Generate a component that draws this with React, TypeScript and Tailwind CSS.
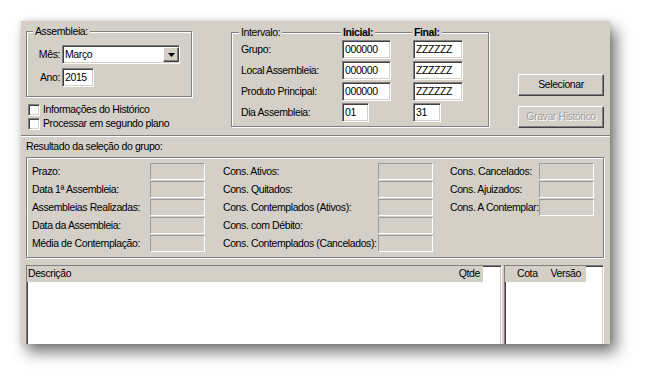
import React from "react";

const sunken =
  "border border-t-[#808080] border-l-[#808080] border-b-white border-r-white shadow-[inset_1px_1px_0_#404040,inset_-1px_-1px_0_#d4d0c8]";
const raised =
  "border border-t-white border-l-white border-b-[#404040] border-r-[#404040] shadow-[inset_-1px_-1px_0_#808080]";
const etched = "border border-[#808080] shadow-[inset_1px_1px_0_white,1px_1px_0_white]";

function Field({ value, w }: { value: string; w: string }) {
  return (
    <div className={`${sunken} ${w} h-[19px] bg-white flex items-center pl-[2px] leading-none`}>
      {value}
    </div>
  );
}

function ReadOnly() {
  return (
    <div className="w-[55px] h-[17px] shrink-0 border border-t-[#9a9a9a] border-l-[#9a9a9a] border-b-white border-r-white bg-[#d4d0c8]" />
  );
}

function Check({ label }: { label: string }) {
  return (
    <div className="flex items-center h-[14px]">
      <div className={`${sunken} w-[12px] h-[12px] bg-white`} />
      <span className="ml-[3px]">{label}</span>
    </div>
  );
}

function Button({ label, disabled }: { label: string; disabled?: boolean }) {
  return (
    <div
      className={`${raised} w-[86px] h-[22px] flex items-center justify-center ${
        disabled ? "text-[#a0a0a0] [text-shadow:1px_1px_0_white]" : "text-black"
      }`}
    >
      {label}
    </div>
  );
}

function ResultCol({ labels, labelW }: { labels: string[]; labelW: string }) {
  return (
    <div className="flex flex-col gap-[1px]">
      {labels.map((l) => (
        <div key={l} className="flex items-center h-[17px]">
          <span className={`${labelW} shrink-0 whitespace-nowrap`}>{l}</span>
          <ReadOnly />
        </div>
      ))}
    </div>
  );
}

export default function App() {
  return (
    <div className="w-[652px] h-[386px] bg-white pt-[21px] pl-[21px] font-['Liberation_Sans',Arial,sans-serif] text-[10.5px] tracking-[-0.4px] text-black">
      <div className="w-[589px] h-[323px] bg-[#d4d0c8] overflow-hidden flex flex-col shadow-[6px_8px_14px_rgba(0,0,0,0.55),0_0_5px_rgba(0,0,0,0.12)]">
        {/* top: filtros */}
        <div className="flex h-[114px] shrink-0">
          <div className="w-[171px] pl-[5px] pt-[10px]">
            <div className={`${etched} relative w-[166px] h-[66px]`}>
              <span className="absolute -top-[7px] left-[6px] px-[2px] bg-[#d4d0c8] leading-[13px]">Assembleia:</span>
              <div className="flex items-center mt-[13px]">
                <span className="w-[35px] text-right pr-[2px]">Mês:</span>
                <div className={`${sunken} w-[118px] h-[19px] bg-white flex items-center justify-between`}>
                  <span className="pl-[2px]">Março</span>
                  <div className={`${raised} w-[16px] h-[15px] bg-[#d4d0c8] flex items-center justify-center`}>
                    <svg width="7" height="4" viewBox="0 0 7 4">
                      <path d="M0 0h7L3.5 4z" fill="#000" />
                    </svg>
                  </div>
                </div>
              </div>
              <div className="flex items-center mt-[4px]">
                <span className="w-[35px] text-right pr-[2px]">Ano:</span>
                <Field value="2015" w="w-[32px]" />
              </div>
            </div>
            <div className="mt-[6px] pl-[2px]">
              <Check label="Informações do Histórico" />
              <Check label="Processar em segundo plano" />
            </div>
          </div>

          <div className={`${etched} relative ml-[39px] mt-[11px] w-[258px] h-[95px]`}>
            <span className="absolute -top-[7px] left-[7px] px-[2px] bg-[#d4d0c8] leading-[13px]">Intervalo:</span>
            <span className="absolute -top-[7px] left-[109px] px-[2px] bg-[#d4d0c8] leading-[13px] font-bold">Inicial:</span>
            <span className="absolute -top-[7px] left-[180px] px-[2px] bg-[#d4d0c8] leading-[13px] font-bold">Final:</span>
            <div className="flex flex-col gap-[2px] pt-[7px] pl-[9px]">
              {[
                ["Grupo:", "000000", "ZZZZZZ", "w-[49px]", "w-[50px]"],
                ["Local Assembleia:", "000000", "ZZZZZZ", "w-[49px]", "w-[50px]"],
                ["Produto Principal:", "000000", "ZZZZZZ", "w-[49px]", "w-[50px]"],
                ["Dia Assembleia:", "01", "31", "w-[27px]", "w-[28px]"],
              ].map(([l, a, b, wa, wb]) => (
                <div key={l} className="flex items-center h-[19px]">
                  <span className="w-[101px]">{l}</span>
                  <Field value={a} w={wa} />
                  <div className={wa === "w-[27px]" ? "w-[44px]" : "w-[22px]"} />
                  <Field value={b} w={wb} />
                </div>
              ))}
            </div>
          </div>

          <div className="ml-[29px] mt-[53px] flex flex-col gap-[10px]">
            <Button label="Selecionar" />
            <Button label="Gravar Histórico" disabled />
          </div>
        </div>

        <div className="h-[2px] shrink-0 border-t border-t-[#808080] border-b border-b-white" />

        <div className="h-[20px] shrink-0 flex items-center pl-[5px]">Resultado da seleção do grupo:</div>

        {/* resultado */}
        <div className={`${etched} shrink-0 mx-[5px] w-[578px] h-[101px] flex pt-[5px] pl-[5px]`}>
          <ResultCol
            labels={["Prazo:", "Data 1ª Assembleia:", "Assembleias Realizadas:", "Data da Assembleia:", "Média de Contemplação:"]}
            labelW="w-[118px]"
          />
          <div className="w-[18px]" />
          <ResultCol
            labels={[
              "Cons. Ativos:",
              "Cons. Quitados:",
              "Cons. Contemplados (Ativos):",
              "Cons. com Débito:",
              "Cons. Contemplados (Cancelados):",
            ]}
            labelW="w-[155px]"
          />
          <div className="w-[17px]" />
          <ResultCol labels={["Cons. Cancelados:", "Cons. Ajuizados:", "Cons. A Contemplar:"]} labelW="w-[89px]" />
        </div>

        {/* listas */}
        <div className="flex gap-[2px] mt-[7px] ml-[5px] flex-1">
          <div className={`${sunken} w-[476px] h-[90px] bg-white`}>
            <div className="w-[456px] h-[16px] bg-[#d4d0c8] flex items-center justify-between pl-[1px] pr-[3px]">
              <span>Descrição</span>
              <span>Qtde</span>
            </div>
          </div>
          <div className={`${sunken} w-[100px] h-[90px] bg-white`}>
            <div className="w-[81px] h-[16px] bg-[#d4d0c8] flex items-center pl-[12px] gap-[13px]">
              <span>Cota</span>
              <span>Versão</span>
            </div>
          </div>
        </div>
      </div>
    </div>
  );
}
